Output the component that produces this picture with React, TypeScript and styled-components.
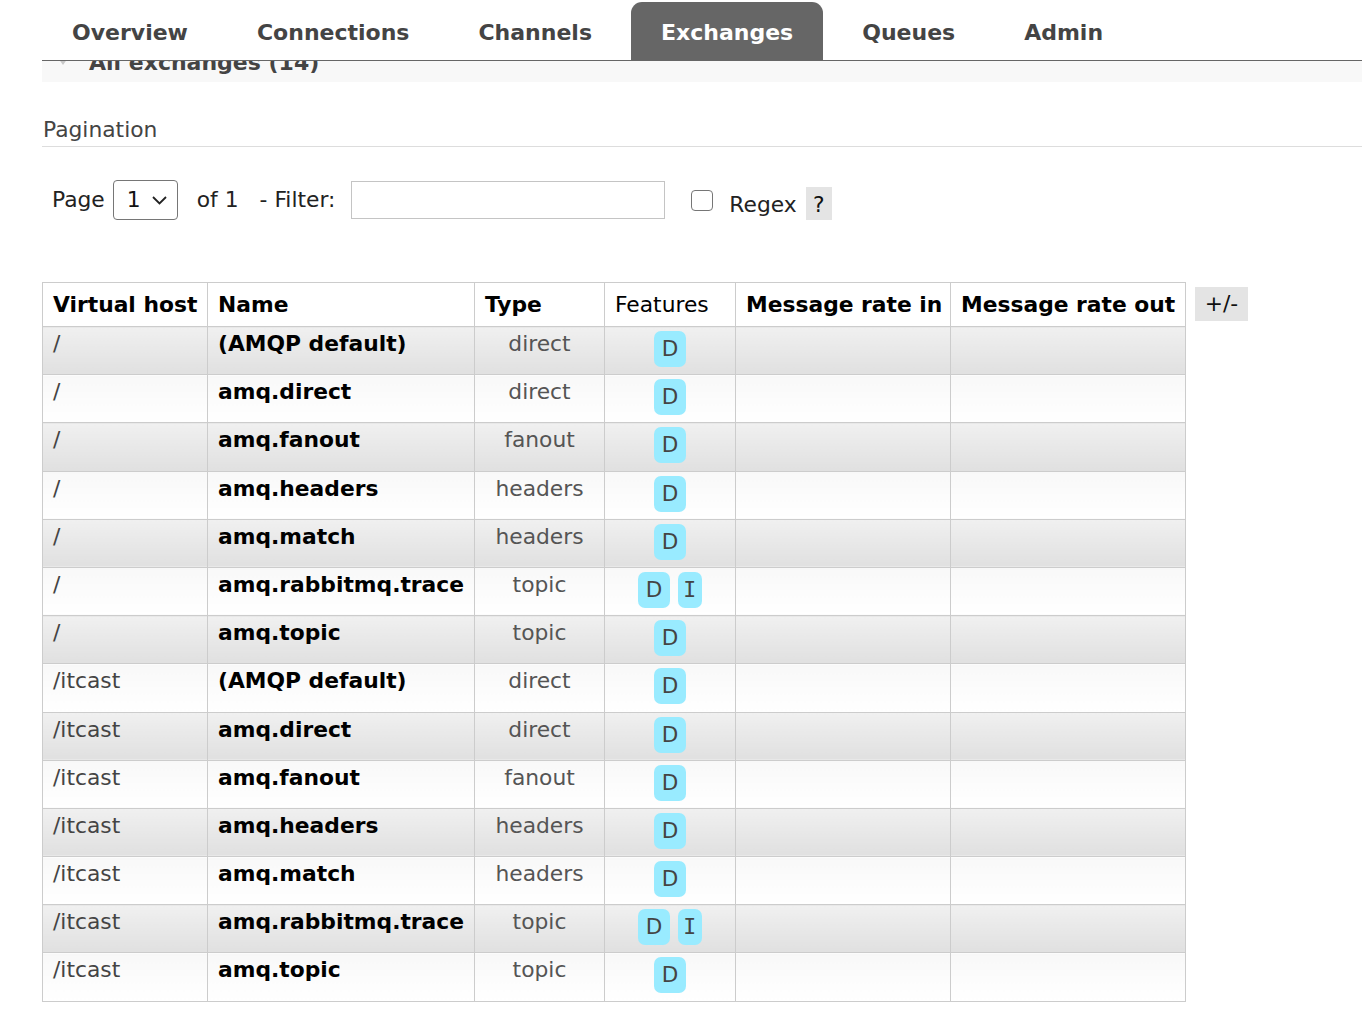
import React from "react";
import styled, { createGlobalStyle } from "styled-components";

const GlobalStyle = createGlobalStyle`
  html, body {
    margin: 0;
    padding: 0;
    background: #fff;
  }
  body {
    font-family: "DejaVu Sans", Verdana, sans-serif;
    font-size: 21.8px;
    color: #484848;
  }
`;

const Page = styled.div`
  padding-left: 42px;
  overflow: hidden;
`;

const Nav = styled.ul`
  display: flex;
  list-style: none;
  margin: 0;
  padding: 2px 0 0 0;
  border-bottom: 1px solid #666;
  position: relative;
  z-index: 2;
  background: #fff;
`;

const Tab = styled.li<{ $active?: boolean }>`
  box-sizing: border-box;
  height: 58px;
  padding: 4px 30px 0;
  line-height: 54px;
  margin-right: 9px;
  font-size: 22px;
  font-weight: bold;
  color: ${(p) => (p.$active ? "#fff" : "#444")};
  background: ${(p) => (p.$active ? "#666" : "transparent")};
  border-radius: 11px 11px 0 0;
  white-space: nowrap;
`;

const SectionStrip = styled.div`
  height: 21px;
  overflow: hidden;
  background: #f8f8f8;
`;

const SectionTitle = styled.h2`
  display: flex;
  align-items: flex-start;
  margin: -10.6px 0 0 0;
  padding-left: 16px;
  font-size: 22px;
  line-height: 26px;
  font-weight: bold;
  color: #444;
  white-space: nowrap;
`;

const Arrow = styled.svg`
  width: 10px;
  height: 7px;
  margin: 8px 21px 0 0;
  flex-shrink: 0;
`;

const SubHeading = styled.h3`
  margin: 35px 0 0 0;
  padding: 0 0 3px 1px;
  font-size: 21.8px;
  line-height: 26px;
  font-weight: normal;
  color: #444;
  border-bottom: 1px solid #ddd;
`;

const PaginationRow = styled.div`
  display: flex;
  align-items: flex-start;
  margin-top: 33px;
  padding-left: 10px;
  color: #222;
  line-height: 26px;
  white-space: nowrap;
`;

const Label = styled.span<{ $ml?: number; $mt?: number }>`
  margin-left: ${(p) => p.$ml ?? 0}px;
  margin-top: ${(p) => p.$mt ?? 7}px;
`;

const SelectBox = styled.div`
  box-sizing: border-box;
  display: flex;
  align-items: center;
  justify-content: space-between;
  width: 65px;
  height: 40px;
  margin-left: 8px;
  padding: 0 10px 0 13px;
  border: 1px solid #767676;
  border-radius: 4px;
  color: #111;
  background: #fff;
`;

const FilterInput = styled.input`
  box-sizing: border-box;
  width: 314px;
  height: 38px;
  margin: 1px 0 0 16px;
  border: 1px solid #c4c4c4;
  padding: 0 6px;
  font: inherit;
  background: #fff;
`;

const CheckBox = styled.input`
  appearance: none;
  box-sizing: border-box;
  width: 22px;
  height: 21px;
  margin: 10px 0 0 26px;
  border: 1.5px solid #767676;
  border-radius: 4px;
  background: #fff;
`;

const HelpBox = styled.span`
  display: inline-block;
  width: 26px;
  height: 33px;
  line-height: 35px;
  margin: 7px 0 0 9px;
  text-align: center;
  background: #e4e4e4;
  color: #111;
`;

const TableArea = styled.div`
  display: flex;
  align-items: flex-start;
  margin-top: 62px;
`;

const List = styled.table`
  border-collapse: collapse;
  table-layout: fixed;
  width: 1143px;
  line-height: 26px;
`;

const Th = styled.th<{ $w: number; $light?: boolean }>`
  width: ${(p) => p.$w}px;
  box-sizing: border-box;
  border: 1px solid #ccc;
  padding: 9px 10px 8px;
  text-align: left;
  font-weight: ${(p) => (p.$light ? "normal" : "bold")};
  color: #000;
  background: #fff;
  white-space: nowrap;
`;

const Row = styled.tr<{ $alt: boolean }>`
  & > td {
    background: ${(p) =>
      p.$alt
        ? "linear-gradient(#f0f0f0, #e0e0e0)"
        : "linear-gradient(#f8f8f8, #ffffff)"};
  }
`;

const Td = styled.td<{ $kind?: "vhost" | "name" | "type" | "features" | "rate" }>`
  border: 1px solid #ccc;
  padding: 4px 10px 7.2px;
  vertical-align: top;
  white-space: nowrap;
  text-align: ${(p) => (p.$kind === "type" || p.$kind === "features" ? "center" : "left")};
  font-weight: ${(p) => (p.$kind === "name" ? "bold" : "normal")};
  color: ${(p) => (p.$kind === "name" ? "#000" : p.$kind === "type" ? "#555" : "#444")};
`;

const Badges = styled.div`
  display: flex;
  justify-content: center;
  gap: 8px;
`;

const Badge = styled.abbr<{ $mono?: boolean }>`
  display: inline-block;
  padding: 5px ${(p) => (p.$mono ? "5.5px" : "7.5px")};
  line-height: 26px;
  border-radius: 7px;
  background: #99ebff;
  color: #444;
  text-decoration: none;
  font-size: 21.5px;
  font-family: ${(p) => (p.$mono ? '"DejaVu Sans Mono", monospace' : "inherit")};
`;

const PlusMinus = styled.span`
  display: inline-block;
  width: 53px;
  height: 34px;
  line-height: 34px;
  margin: 5px 0 0 9px;
  text-align: center;
  background: #e4e4e4;
  color: #111;
`;

type Ex = { vhost: string; name: string; type: string; internal?: boolean };

const names: [string, string, boolean?][] = [
  ["(AMQP default)", "direct"],
  ["amq.direct", "direct"],
  ["amq.fanout", "fanout"],
  ["amq.headers", "headers"],
  ["amq.match", "headers"],
  ["amq.rabbitmq.trace", "topic", true],
  ["amq.topic", "topic"],
];

const rows: Ex[] = ["/", "/itcast"].flatMap((vhost) =>
  names.map(([name, type, internal]) => ({ vhost, name, type, internal }))
);

const tabs = ["Overview", "Connections", "Channels", "Exchanges", "Queues", "Admin"];

export default function App() {
  return (
    <>
      <GlobalStyle />
      <Page>
        <Nav>
          {tabs.map((t) => (
            <Tab key={t} $active={t === "Exchanges"}>
              {t}
            </Tab>
          ))}
        </Nav>
        <SectionStrip>
          <SectionTitle>
            <Arrow viewBox="0 0 10 7">
              <polygon points="0,0 10,0 5,7" fill="#c8c8c8" />
            </Arrow>
            All exchanges (14)
          </SectionTitle>
        </SectionStrip>

        <SubHeading>Pagination</SubHeading>
        <PaginationRow>
          <Label>Page</Label>
          <SelectBox>
            <span>1</span>
            <svg width="15" height="9" viewBox="0 0 15 9">
              <polyline points="1,1 7.5,7.5 14,1" fill="none" stroke="#222" strokeWidth="1.8" />
            </svg>
          </SelectBox>
          <Label $ml={19}>of 1</Label>
          <Label $ml={21}>- Filter:</Label>
          <FilterInput type="text" />
          <CheckBox type="checkbox" />
          <Label $ml={16} $mt={12}>
            Regex
          </Label>
          <HelpBox>?</HelpBox>
        </PaginationRow>

        <TableArea>
          <List>
            <thead>
              <tr>
                <Th $w={165}>Virtual host</Th>
                <Th $w={267}>Name</Th>
                <Th $w={130}>Type</Th>
                <Th $w={131} $light>
                  Features
                </Th>
                <Th $w={215}>Message rate in</Th>
                <Th $w={235}>Message rate out</Th>
              </tr>
            </thead>
            <tbody>
              {rows.map((r, i) => (
                <Row key={r.vhost + r.name} $alt={i % 2 === 0}>
                  <Td $kind="vhost">{r.vhost}</Td>
                  <Td $kind="name">{r.name}</Td>
                  <Td $kind="type">{r.type}</Td>
                  <Td $kind="features">
                    <Badges>
                      <Badge title="durable">D</Badge>
                      {r.internal && (
                        <Badge $mono title="internal">
                          I
                        </Badge>
                      )}
                    </Badges>
                  </Td>
                  <Td $kind="rate" />
                  <Td $kind="rate" />
                </Row>
              ))}
            </tbody>
          </List>
          <PlusMinus>+/-</PlusMinus>
        </TableArea>
      </Page>
    </>
  );
}
